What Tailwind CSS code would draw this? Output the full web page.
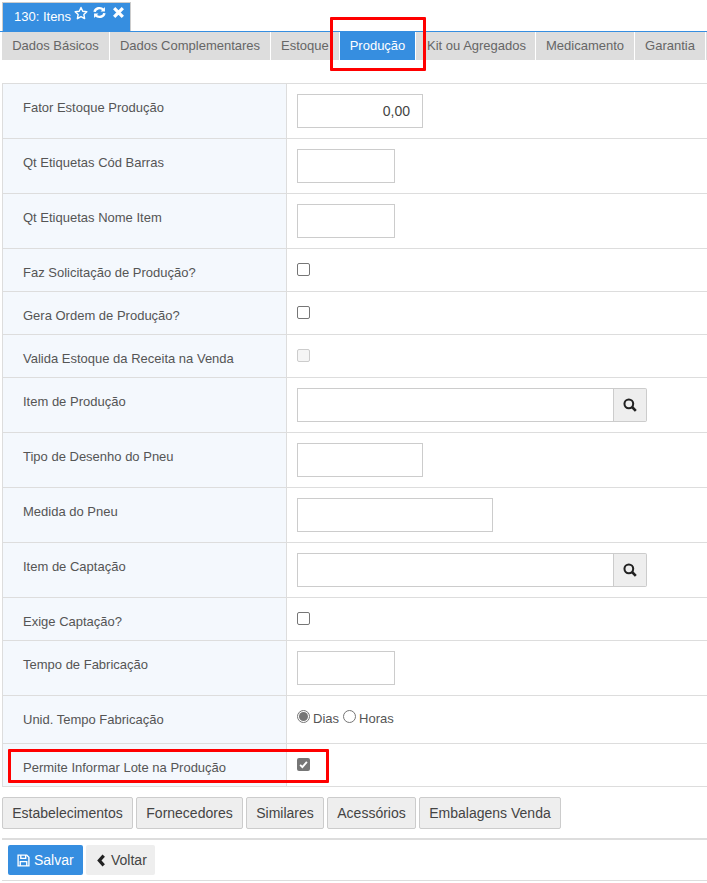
<!DOCTYPE html>
<html lang="pt-BR">
  <head>
    <meta charset="UTF-8" />
    <script src="https://cdn.jsdelivr.net/npm/@tailwindcss/browser@4"></script>
    <title>130: Itens</title>
  </head>
  <body class="relative w-[707px] h-[883px] overflow-hidden bg-white text-[13px] text-[#555] font-['Liberation_Sans',Arial,sans-serif]">
    <!-- titulo -->
    <div class="pt-[2px] pl-[2px] h-[31px]">
      <div class="w-[129px] h-[29px] bg-[#368ee0] border border-b-0 border-[#ccc] text-white text-[13px] pl-[11px] pt-[4px] leading-[20px] flex items-start whitespace-nowrap">
        <span>130: Itens</span>
        <svg class="ml-[3px] -mt-[1px] shrink-0" width="14" height="14" viewBox="0 0 24 24" fill="none" stroke="#fff" stroke-width="2.400" stroke-linejoin="round"><path d="M12 2.500l3 6.500 7 .9-5.100 4.800 1.300 7L12 18.300 5.800 21.700l1.300-7L2 9.900l7-.9z"/></svg>
        <svg class="ml-[5px] -mt-[1px] shrink-0" width="13" height="13" viewBox="0 0 24 24" fill="none" stroke="#fff" stroke-width="4.500"><path d="M3 11a9 8 0 0 1 16-4"/><path d="M21 13a9 8 0 0 1-16 4"/><path d="M22 2v8h-8z" fill="#fff" stroke="none"/><path d="M2 22v-8h8z" fill="#fff" stroke="none"/></svg>
        <svg class="ml-[6px] -mt-[1px] shrink-0" width="13" height="13" viewBox="0 0 24 24" fill="none" stroke="#fff" stroke-width="6"><path d="M4 4l16 16M20 4L4 20"/></svg>
      </div>
    </div>
    <!-- abas -->
    <div class="h-[29px] pl-[2px] border-t border-[#368ee0] flex gap-px text-[13px] text-[#666] leading-[28px]">
      <div class="w-[107px] h-[28px] bg-[#ddd] text-center">Dados Básicos</div>
      <div class="w-[160px] h-[28px] bg-[#ddd] text-center">Dados Complementares</div>
      <div class="w-[68px] h-[28px] bg-[#ddd] pl-[10px]">Estoque</div>
      <div class="w-[75px] h-[28px] bg-[#368ee0] text-white text-center">Produção</div>
      <div class="w-[119px] h-[28px] bg-[#ddd] pl-[11px]">Kit ou Agregados</div>
      <div class="w-[98px] h-[28px] bg-[#ddd] text-center">Medicamento</div>
      <div class="w-[70px] h-[28px] bg-[#ddd] text-center">Garantia</div>
      <div class="flex-1 h-[28px] bg-[#ddd]"></div>
    </div>
    <!-- campos -->
    <div class="mt-[23px] ml-[2px] border-t border-[#ddd] text-[13px]">
      <div class="h-[55px] flex border-b border-[#ddd]">
        <div class="w-[285px] bg-[#f4f8fd] border-x border-[#ddd] pl-[20px] pt-[16px] leading-[15px]">Fator Estoque Produção</div>
        <div class="pl-[10px] pt-[10px]"><div class="w-[126px] h-[34px] border border-[#ccc] text-right pr-[12px] text-[14px] leading-[32px] text-[#444]">0,00</div></div>
      </div>
      <div class="h-[55px] flex border-b border-[#ddd]">
        <div class="w-[285px] bg-[#f4f8fd] border-x border-[#ddd] pl-[20px] pt-[16px] leading-[15px]">Qt Etiquetas Cód Barras</div>
        <div class="pl-[10px] pt-[10px]"><div class="w-[98px] h-[34px] border border-[#ccc]"></div></div>
      </div>
      <div class="h-[55px] flex border-b border-[#ddd]">
        <div class="w-[285px] bg-[#f4f8fd] border-x border-[#ddd] pl-[20px] pt-[16px] leading-[15px]">Qt Etiquetas Nome Item</div>
        <div class="pl-[10px] pt-[10px]"><div class="w-[98px] h-[34px] border border-[#ccc]"></div></div>
      </div>
      <div class="h-[43px] flex border-b border-[#ddd]">
        <div class="w-[285px] bg-[#f4f8fd] border-x border-[#ddd] pl-[20px] pt-[16px] leading-[15px]">Faz Solicitação de Produção?</div>
        <div class="pl-[10px] pt-[14px]"><div class="w-[13px] h-[13px] border border-[#767676] rounded-[2px]"></div></div>
      </div>
      <div class="h-[43px] flex border-b border-[#ddd]">
        <div class="w-[285px] bg-[#f4f8fd] border-x border-[#ddd] pl-[20px] pt-[16px] leading-[15px]">Gera Ordem de Produção?</div>
        <div class="pl-[10px] pt-[14px]"><div class="w-[13px] h-[13px] border border-[#767676] rounded-[2px]"></div></div>
      </div>
      <div class="h-[43px] flex border-b border-[#ddd]">
        <div class="w-[285px] bg-[#f4f8fd] border-x border-[#ddd] pl-[20px] pt-[16px] leading-[15px]">Valida Estoque da Receita na Venda</div>
        <div class="pl-[10px] pt-[14px]"><div class="w-[13px] h-[13px] border border-[#ccc] bg-[#f5f5f5] rounded-[2px]"></div></div>
      </div>
      <div class="h-[55px] flex border-b border-[#ddd]">
        <div class="w-[285px] bg-[#f4f8fd] border-x border-[#ddd] pl-[20px] pt-[16px] leading-[15px]">Item de Produção</div>
        <div class="pl-[10px] pt-[10px] flex">
          <div class="w-[317px] h-[34px] border border-[#ccc]"></div>
          <div class="w-[33px] h-[34px] border border-l-0 border-[#ccc] bg-[#eee] rounded-r-[2px] flex items-center justify-center">
            <svg width="14" height="14" viewBox="0 0 24 24" fill="none" stroke="#222" stroke-width="3.500"><circle cx="10" cy="10" r="7.500"/><path d="M15.500 15.500l6.500 6.500" stroke-width="4.500"/></svg>
          </div>
        </div>
      </div>
      <div class="h-[55px] flex border-b border-[#ddd]">
        <div class="w-[285px] bg-[#f4f8fd] border-x border-[#ddd] pl-[20px] pt-[16px] leading-[15px]">Tipo de Desenho do Pneu</div>
        <div class="pl-[10px] pt-[10px]"><div class="w-[126px] h-[34px] border border-[#ccc]"></div></div>
      </div>
      <div class="h-[55px] flex border-b border-[#ddd]">
        <div class="w-[285px] bg-[#f4f8fd] border-x border-[#ddd] pl-[20px] pt-[16px] leading-[15px]">Medida do Pneu</div>
        <div class="pl-[10px] pt-[10px]"><div class="w-[196px] h-[34px] border border-[#ccc]"></div></div>
      </div>
      <div class="h-[55px] flex border-b border-[#ddd]">
        <div class="w-[285px] bg-[#f4f8fd] border-x border-[#ddd] pl-[20px] pt-[16px] leading-[15px]">Item de Captação</div>
        <div class="pl-[10px] pt-[10px] flex">
          <div class="w-[317px] h-[34px] border border-[#ccc]"></div>
          <div class="w-[33px] h-[34px] border border-l-0 border-[#ccc] bg-[#eee] rounded-r-[2px] flex items-center justify-center">
            <svg width="14" height="14" viewBox="0 0 24 24" fill="none" stroke="#222" stroke-width="3.500"><circle cx="10" cy="10" r="7.500"/><path d="M15.500 15.500l6.500 6.500" stroke-width="4.500"/></svg>
          </div>
        </div>
      </div>
      <div class="h-[43px] flex border-b border-[#ddd]">
        <div class="w-[285px] bg-[#f4f8fd] border-x border-[#ddd] pl-[20px] pt-[16px] leading-[15px]">Exige Captação?</div>
        <div class="pl-[10px] pt-[14px]"><div class="w-[13px] h-[13px] border border-[#767676] rounded-[2px]"></div></div>
      </div>
      <div class="h-[55px] flex border-b border-[#ddd]">
        <div class="w-[285px] bg-[#f4f8fd] border-x border-[#ddd] pl-[20px] pt-[16px] leading-[15px]">Tempo de Fabricação</div>
        <div class="pl-[10px] pt-[10px]"><div class="w-[98px] h-[34px] border border-[#ccc]"></div></div>
      </div>
      <div class="h-[48px] flex border-b border-[#ddd]">
        <div class="w-[285px] bg-[#f4f8fd] border-x border-[#ddd] pl-[20px] pt-[16px] leading-[15px]">Unid. Tempo Fabricação</div>
        <div class="pl-[10px] pt-[14px] flex items-start text-[13px] leading-[16px]">
          <div class="w-[13px] h-[13px] rounded-full border border-[#767676] flex items-center justify-center"><div class="w-[9px] h-[9px] rounded-full bg-[#767676]"></div></div>
          <span class="ml-[3px] mt-px">Dias</span>
          <div class="ml-[4px] w-[13px] h-[13px] rounded-full border border-[#767676]"></div>
          <span class="ml-[3px] mt-px">Horas</span>
        </div>
      </div>
      <div class="h-[43px] flex border-b border-[#ddd]">
        <div class="w-[285px] bg-[#f4f8fd] border-x border-[#ddd] pl-[20px] pt-[16px] leading-[15px]">Permite Informar Lote na Produção</div>
        <div class="pl-[10px] pt-[14px]">
          <div class="w-[13px] h-[13px] bg-[#767676] rounded-[2px] flex items-center justify-center">
            <svg width="9" height="9" viewBox="0 0 24 24" fill="none" stroke="#fff" stroke-width="5"><path d="M3 13l6 6L21 5"/></svg>
          </div>
        </div>
      </div>
    </div>
    <!-- botoes -->
    <div class="mt-[10px] ml-[2px] flex gap-[3px] text-[14px] text-[#444] leading-[30px]">
      <div class="w-[131px] h-[32px] bg-[#eee] border border-[#ccc] rounded-[2px] text-center">Estabelecimentos</div>
      <div class="w-[107px] h-[32px] bg-[#eee] border border-[#ccc] rounded-[2px] text-center">Fornecedores</div>
      <div class="w-[78px] h-[32px] bg-[#eee] border border-[#ccc] rounded-[2px] text-center">Similares</div>
      <div class="w-[89px] h-[32px] bg-[#eee] border border-[#ccc] rounded-[2px] text-center">Acessórios</div>
      <div class="w-[142px] h-[32px] bg-[#eee] border border-[#ccc] rounded-[2px] text-center">Embalagens Venda</div>
    </div>
    <div class="mt-[9px] ml-[2px] h-[43px] border-t-2 border-b border-[#ddd] pt-[5px] pl-[6px] flex gap-[3px] text-[14px] leading-[30px]">
      <div class="w-[75px] h-[30px] bg-[#368ee0] text-white rounded-[2px] flex items-center pl-[9px]">
        <svg width="13" height="13" viewBox="0 0 24 24" fill="none" stroke="#fff" stroke-width="2.500"><path d="M2 2h16l4 4v16H2z"/><path d="M7 2v6h9V2M6 22v-8h12v8"/></svg>
        <span class="ml-[4px]">Salvar</span>
      </div>
      <div class="w-[69px] h-[30px] bg-[#eee] text-[#444] rounded-[2px] flex items-center pl-[10px]">
        <svg width="10" height="13" viewBox="0 0 14 24" fill="none" stroke="#222" stroke-width="6"><path d="M12 3L4 12l8 9"/></svg>
        <span class="ml-[5px]">Voltar</span>
      </div>
    </div>
    <!-- destaques em vermelho -->
    <div class="absolute left-[330px] top-[17px] w-[96px] h-[54px] border-[3px] border-[#f00] rounded-[1px]"></div>
    <div class="absolute left-[8px] top-[749px] w-[321px] h-[34px] border-[3px] border-[#f00] rounded-[1px]"></div>
  </body>
</html>
